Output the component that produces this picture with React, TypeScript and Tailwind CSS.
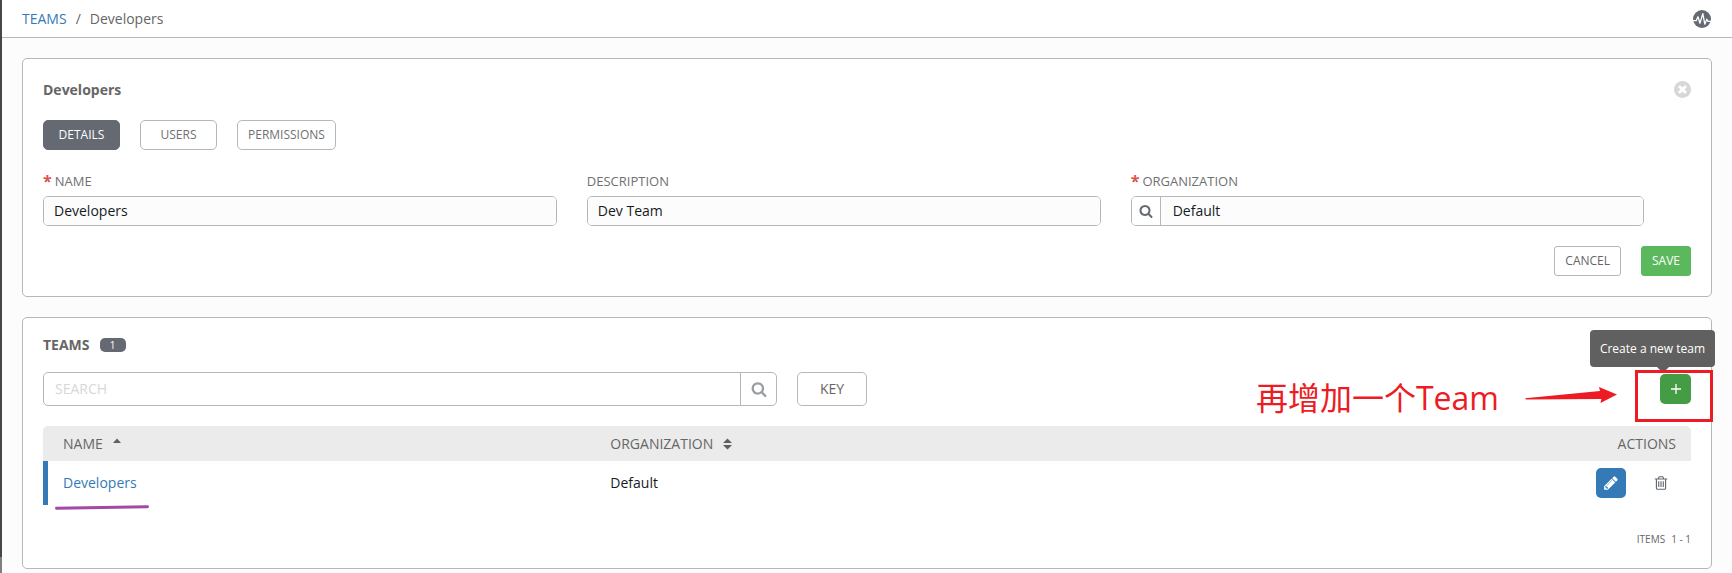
import type { ReactNode } from "react";

const SEARCH =
  "M1216 832q0-185-131.5-316.5t-316.5-131.5-316.5 131.5-131.5 316.5 131.5 316.5 316.5 131.5 316.5-131.5 131.5-316.5zm512 832q0 52-38 90t-90 38q-54 0-90-38l-343-342q-179 124-399 124-143 0-273.5-55.5t-225-150-150-225-55.5-273.5 55.5-273.5 150-225 225-150 273.5-55.5 273.5 55.5 225 150 150 225 55.5 273.5q0 220-124 399l343 343q37 37 37 90z";
const CLOSE =
  "M1277 1122q0-26-19-45l-181-181 181-181q19-19 19-45 0-27-19-46l-90-90q-19-19-46-19-26 0-45 19l-181 181-181-181q-19-19-45-19-27 0-46 19l-90 90q-19 19-19 46 0 26 19 45l181 181-181 181q-19 19-19 45 0 27 19 46l90 90q19 19 46 19 26 0 45-19l181-181 181 181q19 19 45 19 27 0 46-19l90-90q19-19 19-46zm387-226q0 209-103 385.5t-279.5 279.5-385.5 103-385.5-103-279.5-279.5-103-385.5 103-385.5 279.5-279.5 385.5-103 385.5 103 279.5 279.5 103 385.5z";
const PENCIL =
  "M491 1536l91-91-235-235-91 91v107h128v128h107zm523-928q0-22-22-22-10 0-17 7l-542 542q-7 7-7 17 0 22 22 22 10 0 17-7l542-542q7-7 7-17zm-54-192l416 416-832 832h-416v-416zm683 96q0 53-37 90l-166 166-416-416 166-165q36-38 90-38 53 0 91 38l235 234q37 39 37 91z";
const TRASH =
  "M704 736v576q0 14-9 23t-23 9h-64q-14 0-23-9t-9-23v-576q0-14 9-23t23-9h64q14 0 23 9t9 23zm256 0v576q0 14-9 23t-23 9h-64q-14 0-23-9t-9-23v-576q0-14 9-23t23-9h64q14 0 23 9t9 23zm256 0v576q0 14-9 23t-23 9h-64q-14 0-23-9t-9-23v-576q0-14 9-23t23-9h64q14 0 23 9t9 23zm128 724v-948h-896v948q0 22 7 40.5t14.5 27 10.5 8.5h832q3 0 10.5-8.5t14.5-27 7-40.5zm-672-1076h448l-48-117q-7-9-17-11h-317q-10 2-17 11zm928 32v64q0 14-9 23t-23 9h-96v948q0 83-47 143.5t-113 60.5h-832q-66 0-113-58.5t-47-141.5v-952h-96q-14 0-23-9t-9-23v-64q0-14 9-23t23-9h309l70-167q15-37 54-63t79-26h320q40 0 79 26t54 63l70 167h309q14 0 23 9t9 23z";

function Glyph({ d, box = "0 0 1792 1792", className }: { d: string; box?: string; className: string }) {
  return (
    <svg viewBox={box} className={className} fill="currentColor" aria-hidden="true">
      <path d={d} />
    </svg>
  );
}

function Panel({ children }: { children: ReactNode }) {
  return <section className="rounded-[5px] border border-[#b7b7b7] bg-white px-5 pb-5">{children}</section>;
}

function Tab({ label, active = false }: { label: string; active?: boolean }) {
  return (
    <button
      type="button"
      aria-pressed={active}
      className={
        active
          ? "h-[30px] min-w-[77px] rounded-[5px] border border-[#646972] bg-[#646972] px-[10px] text-xs text-white"
          : "h-[30px] min-w-[77px] rounded-[5px] border border-[#b7b7b7] bg-white px-[10px] text-xs text-[#707070]"
      }
    >
      {label}
    </button>
  );
}

function Field({ id, label, value, required, lookup }: { id: string; label: string; value: string; required?: boolean; lookup?: boolean }) {
  return (
    <div className="w-[33%] pr-[30px]">
      <label htmlFor={id} className="flex h-5 items-center gap-[3px] text-[13px] text-[#707070]">
        {required && <span className="text-base font-bold leading-5 text-[#d9534f]">*</span>}
        {label}
      </label>
      <div className="mt-[5px] flex h-[30px] overflow-hidden rounded-[5px] border border-[#b7b7b7]">
        {lookup && (
          <button type="button" aria-label="Look up organization" className="flex w-[29px] shrink-0 items-center justify-center border-r border-[#b7b7b7] bg-white text-[#646972]">
            <Glyph d={SEARCH} className="size-[14px]" />
          </button>
        )}
        <input
          id={id}
          defaultValue={value}
          className={
            lookup
              ? "min-w-0 flex-1 bg-[#fcfcfc] px-3 text-sm text-[#161b1f] outline-none"
              : "min-w-0 flex-1 bg-[#fcfcfc] px-[10px] text-sm text-[#161b1f] outline-none"
          }
        />
      </div>
    </div>
  );
}

export default function App() {
  return (
    <div className="flex min-h-screen bg-[#fcfcfc] font-['Open_Sans','Noto_Sans_CJK_SC',sans-serif] text-sm text-[#666666]">
      <div className="flex w-[2px] shrink-0 flex-col bg-[#474749]">
        <div className="mt-auto h-4 bg-[#7f7f80]" />
      </div>
      <div className="min-w-0 flex-1">
        <header className="flex h-[38px] items-center justify-between border-b border-[#b7b7b7] bg-white pl-5 pr-[21px]">
          <nav aria-label="Breadcrumb" className="flex gap-[9px]">
            <a href="#teams" className="text-[#337ab7]">TEAMS</a>
            <span>/</span>
            <span>Developers</span>
          </nav>
          <button type="button" aria-label="Activity stream">
            <svg viewBox="0 0 18 18" className="size-[18px]" aria-hidden="true">
              <circle cx="9" cy="9" r="9" fill="#646972" />
              <path d="M0 10.6h3.2L5 6.8l1.9 6.4L9.8 3.6l2 10.6 2-5 1.2 2.2H18" fill="none" stroke="#fff" strokeWidth="1.3" strokeLinejoin="round" />
            </svg>
          </button>
        </header>

        <main className="flex flex-col gap-5 px-5 pb-1 pt-5">
          <Panel>
            <div className="flex h-[61px] items-center justify-between">
              <h1 className="font-bold">Developers</h1>
              <button type="button" aria-label="Close" className="text-[#d7d7d7]">
                <Glyph d={CLOSE} box="128 128 1536 1536" className="size-[17px]" />
              </button>
            </div>
            <div className="flex gap-5">
              <Tab label="DETAILS" active />
              <Tab label="USERS" />
              <Tab label="PERMISSIONS" />
            </div>
            <form className="mt-[21px]">
              <div className="flex">
                <Field id="team-name" label="NAME" value="Developers" required />
                <Field id="team-description" label="DESCRIPTION" value="Dev Team" />
                <Field id="team-organization" label="ORGANIZATION" value="Default" required lookup />
              </div>
              <div className="mt-5 flex justify-end gap-5 text-xs">
                <button type="button" className="h-[30px] rounded-[3px] border border-[#b7b7b7] bg-white px-[10px]">CANCEL</button>
                <button type="button" className="h-[30px] rounded-[3px] border border-[#5cb85c] bg-[#5cb85c] px-[10px] text-white">SAVE</button>
              </div>
            </form>
          </Panel>

          <Panel>
            <div className="flex h-[54px] items-center gap-[10px]">
              <h2 className="font-bold">TEAMS</h2>
              <span className="flex h-[14px] w-[26px] items-center justify-center rounded-[5px] bg-[#646972] text-[10px] text-white">1</span>
            </div>

            <div className="relative flex items-start gap-5">
              <div className="flex h-[34px] w-[734px] overflow-hidden rounded-[5px] border border-[#b7b7b7]">
                <input aria-label="Search teams" placeholder="SEARCH" className="min-w-0 flex-1 px-[11px] text-sm outline-none placeholder:text-[#d7d7d7]" />
                <button type="button" aria-label="Search" className="flex w-9 items-center justify-center border-l border-[#b7b7b7] text-[#9a9da4]">
                  <Glyph d={SEARCH} className="size-4" />
                </button>
              </div>
              <button type="button" className="h-[34px] w-[70px] rounded-[5px] border border-[#b7b7b7] bg-white text-sm">KEY</button>
              <div className="relative ml-auto mt-[2px]">
                <button type="button" aria-label="Create a new team" className="flex h-[30px] w-[31px] items-center justify-center rounded-[5px] bg-[#449d44] text-white">
                  <svg viewBox="0 0 10 10" className="size-[10px]" aria-hidden="true">
                    <path d="M5 0v10M0 5h10" stroke="currentColor" strokeWidth="1.3" />
                  </svg>
                </button>
                <div role="tooltip" className="absolute -right-6 bottom-[37px] whitespace-nowrap rounded-[4px] bg-[#606060] px-[10px] py-[10px] text-xs leading-[17px] text-white">
                  Create a new team
                  <svg viewBox="0 0 12 6" className="absolute right-[46px] top-full h-[6px] w-3" aria-hidden="true">
                    <path d="M0 0h12L6 6z" fill="#606060" />
                  </svg>
                </div>
                <div className="absolute -right-[22px] -top-1 h-[52px] w-[78px] border-[3px] border-[#ed1c24]" />
              </div>
              <div className="absolute right-[74px] top-[6px] flex items-start gap-[26px] text-[#ed1c24]">
                <span className="whitespace-nowrap text-[32px] leading-10">再增加一个Team</span>
                <svg viewBox="0 0 92 18" className="mt-2 h-[18px] w-[92px]" aria-hidden="true">
                  <path d="M0 12.3 75 5 74 1l18 7.5L75.500 17l.8-4L1 13.500z" fill="currentColor" />
                </svg>
              </div>
            </div>

            <table className="mt-5 w-full table-fixed border-separate border-spacing-0 text-left">
              <thead>
                <tr className="h-[35px] bg-[#ebebeb]">
                  <th className="w-1/3 rounded-tl-[5px] p-0 pl-5 font-normal">
                    <button type="button" className="flex items-center gap-[10px]">
                      NAME
                      <svg viewBox="0 0 8 12" className="h-3 w-2" fill="#606060" aria-hidden="true">
                        <path d="M0 5 4 .5 8 5z" />
                      </svg>
                    </button>
                  </th>
                  <th className="p-0 pl-[18px] font-normal">
                    <button type="button" className="flex items-center gap-[10px]">
                      ORGANIZATION
                      <svg viewBox="0 0 9 12" className="h-3 w-[9px]" fill="#606060" aria-hidden="true">
                        <path d="M0 5 4.500 .5 9 5zM0 7h9l-4.500 4.500z" />
                      </svg>
                    </button>
                  </th>
                  <th className="rounded-tr-[5px] p-0 pr-[15px] text-right font-normal">ACTIONS</th>
                </tr>
              </thead>
              <tbody>
                <tr className="h-11">
                  <td className="border-l-[5px] border-[#337ab7] p-0 pl-[15px]">
                    <span className="relative inline-block">
                      <a href="#developers" className="text-[#337ab7]">Developers</a>
                      <svg viewBox="0 0 94 5" className="absolute -left-2 top-8 h-[5px] w-[94px]" aria-hidden="true">
                        <path d="M1.500 3.300 92.500 1.700" stroke="#a349a4" strokeWidth="3" strokeLinecap="round" />
                      </svg>
                    </span>
                  </td>
                  <td className="p-0 pl-[18px] text-[#161b1f]">Default</td>
                  <td className="p-0 pr-[15px]">
                    <div className="flex justify-end gap-5">
                      <button type="button" aria-label="Edit team" className="flex size-[30px] items-center justify-center rounded-[5px] bg-[#337ab7] text-white">
                        <Glyph d={PENCIL} className="size-4" />
                      </button>
                      <button type="button" aria-label="Delete team" className="flex size-[30px] items-center justify-center text-[#646972]">
                        <Glyph d={TRASH} className="size-4" />
                      </button>
                    </div>
                  </td>
                </tr>
              </tbody>
            </table>
            <div className="mt-[25px] flex h-[18px] items-center justify-end gap-[6px] text-[10px]">
              <span>ITEMS</span>
              <span>1 - 1</span>
            </div>
          </Panel>
        </main>
      </div>
    </div>
  );
}
